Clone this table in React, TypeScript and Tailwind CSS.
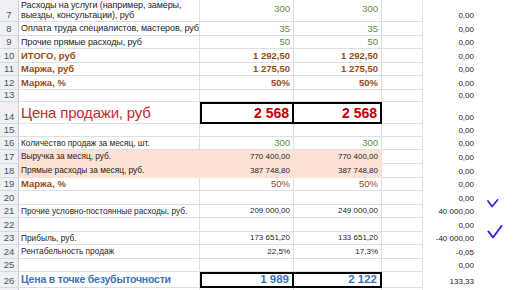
import React from "react";

const grid = "border-[#dcdfe3]";

type RowProps = {
  n: number;
  h: string;
  label?: React.ReactNode;
  labelCls?: string;
  b?: React.ReactNode;
  c?: React.ReactNode;
  valCls?: string;
  e?: React.ReactNode;
  fill?: boolean;
  box?: boolean;
  align?: string;
};

function Row({ n, h, label, labelCls = "", b, c, valCls = "", e, fill, box, align = "items-center" }: RowProps) {
  const cellBg = fill ? "bg-[#fbe2d4]" : "";
  const lines = fill ? "border-transparent" : grid;
  return (
    <div className={`flex ${h}`}>
      <div className="w-[19px] shrink-0 flex items-end justify-center pb-[1px] bg-[#eef0f3] border-r border-b border-r-[#c5cad2] border-b-[#d6dae0] text-[9.5px] leading-[10px] text-[#4a586b]">
        {n}
      </div>
      <div className={`w-[181px] shrink-0 flex ${align} pl-[2px] border-r border-b ${lines} ${cellBg} ${labelCls} whitespace-nowrap overflow-hidden`}>
        {label}
      </div>
      {box ? (
        <>
          <div className={`w-[94px] shrink-0 flex items-center justify-end pr-[3px] border-2 border-black ${valCls}`}>{b}</div>
          <div className={`w-[88px] shrink-0 flex items-center justify-end pr-[3px] border-2 border-l-0 border-black ${valCls}`}>{c}</div>
        </>
      ) : (
        <>
          <div className={`w-[94px] shrink-0 flex ${align} justify-end pr-[3px] border-r border-b ${lines} ${cellBg} ${valCls}`}>{b}</div>
          <div className={`w-[88px] shrink-0 flex ${align} justify-end pr-[3px] border-r border-b ${lines} ${cellBg} ${valCls}`}>{c}</div>
        </>
      )}
      <div className={`w-[41px] shrink-0 border-r border-b ${grid}`} />
      <div className="w-[51px] shrink-0 flex items-end justify-end pb-[1px] text-[8px] leading-[10px] text-[#222]">{e}</div>
      <div className="flex-1" />
    </div>
  );
}

const green = "text-[9.5px] text-[#5e8d43]";
const brown = "text-[9.5px] font-bold text-[#9b4b14]";
const plain = "text-[8px] text-[#1e1e1e]";
const small = "text-[8.3px] text-[#1e1e1e]";
const calibri = "text-[9px] text-[#1e1e1e] tracking-[-0.1px]";

function Check({ big }: { big?: boolean }) {
  return big ? (
    <svg width="16" height="14" viewBox="0 0 16 14" className="absolute left-[487px] top-[225px]">
      <path d="M1.5 6.5 L6 12.5 L14.5 1" fill="none" stroke="#2a2ad6" strokeWidth="2" strokeLinecap="round" strokeLinejoin="round" />
    </svg>
  ) : (
    <svg width="12" height="9" viewBox="0 0 12 9" className="absolute left-[487px] top-[199px]">
      <path d="M1 2 L5 7.5 L10.5 1" fill="none" stroke="#2a2ad6" strokeWidth="1.8" strokeLinecap="round" strokeLinejoin="round" />
    </svg>
  );
}

export default function App() {
  return (
    <div
      className="relative w-[516px] h-[290px] overflow-hidden bg-white leading-none"
      style={{ fontFamily: '"Liberation Sans", Arial, sans-serif' }}
    >
      <Row
        n={7}
        h="h-[22px]"
        align="items-start"
        labelCls={calibri}
        label={
          <div className="leading-[10px] pt-0">
            Расходы на услуги (например, замеры,
            <br />
            выезды, консультации), руб
          </div>
        }
        b={<span className="mt-[4px]">300</span>}
        c={<span className="mt-[4px]">300</span>}
        valCls={green}
        e="0,00"
      />
      <Row n={8} h="h-[14px]" labelCls={calibri} label="Оплата труда специалистов, мастеров, руб" b="35" c="35" valCls={green} e="0,00" />
      <Row n={9} h="h-[13px]" labelCls={calibri} label="Прочие прямые расходы, руб" b="50" c="50" valCls={green} e="0,00" />
      <Row n={10} h="h-[14px]" labelCls={brown} label="ИТОГО, руб" b="1 292,50" c="1 292,50" valCls={brown} e="0,00" />
      <Row n={11} h="h-[13px]" labelCls={brown} label="Маржа, руб" b="1 275,50" c="1 275,50" valCls={brown} e="0,00" />
      <Row n={12} h="h-[14px]" labelCls={brown} label="Маржа, %" b="50%" c="50%" valCls={brown} e="0,00" />
      <Row n={13} h="h-[12px]" e="0,00" />
      <Row
        n={14}
        h="h-[22px]"
        labelCls="text-[15px] text-[#c42b30] tracking-[-0.2px]"
        label="Цена продажи, руб"
        b="2 568"
        c="2 568"
        box
        valCls="text-[14px] font-bold text-[#c00000]"
        e="0,00"
      />
      <Row n={15} h="h-[13px]" e="0,00" />
      <Row n={16} h="h-[13px]" labelCls={small} label="Количество продаж за месяц, шт." b="300" c="300" valCls={green} e="0,00" />
      <Row n={17} h="h-[14px]" fill labelCls={small} label="Выручка  за месяц, руб." b="770 400,00" c="770 400,00" valCls={plain} e="0,00" />
      <Row n={18} h="h-[14px]" fill labelCls={small} label="Прямые расходы за месяц, руб." b="387 748,80" c="387 748,80" valCls={plain} e="0,00" />
      <Row n={19} h="h-[13px]" labelCls={brown} label="Маржа, %" b="50%" c="50%" valCls="text-[9.5px] text-[#9b4b14]" e="0,00" />
      <Row n={20} h="h-[14px]" e="0,00" />
      <Row n={21} h="h-[13px]" labelCls={small} label="Прочие условно-постоянные расходы, руб." b="209 000,00" c="249 000,00" valCls={plain} e="40 000,00" />
      <Row n={22} h="h-[14px]" e="0,00" />
      <Row n={23} h="h-[13px]" labelCls={small} label="Прибыль, руб." b="173 651,20" c="133 651,20" valCls={plain} e="-40 000,00" />
      <Row n={24} h="h-[14px]" labelCls={small} label="Рентабельность продаж" b="22,5%" c="17,3%" valCls={plain} e="-0,05" />
      <Row n={25} h="h-[13px]" e="0,00" />
      <Row
        n={26}
        h="h-[16px]"
        labelCls="text-[10.5px] font-bold text-[#3a73b8] tracking-[-0.2px]"
        label="Цена в точке безубыточности"
        b="1 989"
        c="2 122"
        box
        valCls="text-[11.5px] font-bold text-[#3a73b8]"
        e="133,33"
      />
      <Row n={27} h="h-[13px]" labelCls="text-[8px] text-[#3a73b8]" label="Продажи до прибыли" b="0" c="0" valCls="text-[9px] text-[#3a73b8]" e="0,00" />
      <Check />
      <Check big />
    </div>
  );
}
